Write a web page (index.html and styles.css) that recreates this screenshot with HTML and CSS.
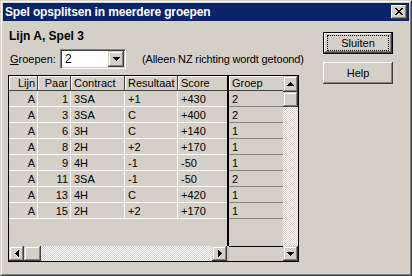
FILE: index.html
```html
<!DOCTYPE html>
<html lang="nl">
<head>
    <meta charset="UTF-8">
    <title>Spel opsplitsen in meerdere groepen</title>
    <link rel="stylesheet" href="styles.css">
</head>
<body>
    <div class="window">
        <div class="frame">
            <div class="titlebar">
                <span class="title">Spel opsplitsen in meerdere groepen</span>
                <span class="close">
                    <svg width="8" height="7" viewBox="0 0 8 7" shape-rendering="crispEdges"><path d="M0 0h2v1H0zM6 0h2v1H6zM1 1h2v1H1zM5 1h2v1H5zM2 2h4v1H2zM3 3h2v1H3zM2 4h4v1H2zM1 5h2v1H1zM5 5h2v1H5zM0 6h2v1H0zM6 6h2v1H6z"/></svg>
                </span>
            </div>
            <div class="content">
                <div class="main">
                    <div class="heading">Lijn A, Spel 3</div>
                    <div class="filter">
                        <label class="label"><u>G</u>roepen:</label>
                        <div class="combo">
                            <span class="combo-value">2</span>
                            <span class="sb-btn combo-btn">
                                <svg width="7" height="4" viewBox="0 0 7 4" shape-rendering="crispEdges"><path d="M0 0h7v1H0zM1 1h5v1H1zM2 2h3v1H2zM3 3h1v1H3z"/></svg>
                            </span>
                        </div>
                        <span class="hint">(Alleen NZ richting wordt getoond)</span>
                    </div>
                    <div class="grid">
                        <div class="pane-left">
                            <div class="cells">
                                <div class="hd r">Lijn</div><div class="hd r">Paar</div><div class="hd">Contract</div><div class="hd">Resultaat</div><div class="hd last">Score</div>
                                <div class="c r">A</div><div class="c r">1</div><div class="c">3SA</div><div class="c">+1</div><div class="c last">+430</div>
                                <div class="c r">A</div><div class="c r">3</div><div class="c">3SA</div><div class="c">C</div><div class="c last">+400</div>
                                <div class="c r">A</div><div class="c r">6</div><div class="c">3H</div><div class="c">C</div><div class="c last">+140</div>
                                <div class="c r">A</div><div class="c r">8</div><div class="c">2H</div><div class="c">+2</div><div class="c last">+170</div>
                                <div class="c r">A</div><div class="c r">9</div><div class="c">4H</div><div class="c">-1</div><div class="c last">-50</div>
                                <div class="c r">A</div><div class="c r">11</div><div class="c">3SA</div><div class="c">-1</div><div class="c last">-50</div>
                                <div class="c r">A</div><div class="c r">13</div><div class="c">4H</div><div class="c">C</div><div class="c last">+420</div>
                                <div class="c r">A</div><div class="c r">15</div><div class="c">2H</div><div class="c">+2</div><div class="c last">+170</div>
                            </div>
                            <div class="fill"></div>
                            <div class="hscroll">
                                <span class="sb-btn sb-side">
                                    <svg width="4" height="7" viewBox="0 0 4 7" shape-rendering="crispEdges"><path d="M3 0h1v7H3zM2 1h1v5H2zM1 2h1v3H1zM0 3h1v1H0z"/></svg>
                                </span>
                                <span class="sb-btn sb-thumb-h"></span>
                                <span class="track"></span>
                                <span class="sb-btn sb-side">
                                    <svg width="4" height="7" viewBox="0 0 4 7" shape-rendering="crispEdges"><path d="M0 0h1v7H0zM1 1h1v5H1zM2 2h1v3H2zM3 3h1v1H3z"/></svg>
                                </span>
                            </div>
                        </div>
                        <div class="splitter">
                            <div class="split-line"></div>
                            <div class="split-foot"></div>
                        </div>
                        <div class="pane-right">
                            <div class="cells-groep">
                                <div class="hd last">Groep</div>
                                <div class="g">2</div>
                                <div class="g">2</div>
                                <div class="g">1</div>
                                <div class="g">1</div>
                                <div class="g">1</div>
                                <div class="g">2</div>
                                <div class="g">1</div>
                                <div class="g">1</div>
                            </div>
                            <div class="fill"></div>
                            <div class="pane-foot"></div>
                        </div>
                        <div class="vscroll">
                            <span class="sb-btn sb-up">
                                <svg width="7" height="4" viewBox="0 0 7 4" shape-rendering="crispEdges"><path d="M3 0h1v1H3zM2 1h3v1H2zM1 2h5v1H1zM0 3h7v1H0z"/></svg>
                            </span>
                            <span class="sb-btn sb-thumb-v"></span>
                            <span class="track"></span>
                            <span class="sb-btn sb-down">
                                <svg width="7" height="4" viewBox="0 0 7 4" shape-rendering="crispEdges"><path d="M0 0h7v1H0zM1 1h5v1H1zM2 2h3v1H2zM3 3h1v1H3z"/></svg>
                            </span>
                        </div>
                    </div>
                </div>
                <div class="actions">
                    <button class="btn default"><span class="focus">Sluiten</span></button>
                    <button class="btn">Help</button>
                </div>
            </div>
        </div>
    </div>
</body>
</html>
```

FILE: styles.css
```css
body {
    margin: 0;
    background-color: #d4d0c8;
    font-family: "Liberation Sans", Arial, sans-serif;
    font-size: 11px;
    color: #000;
}

.window {
    width: 412px;
    height: 276px;
    box-sizing: border-box;
    border: 1px solid;
    border-color: #d4d0c8 #404040 #404040 #d4d0c8;
}

.frame {
    height: 100%;
    box-sizing: border-box;
    border: 1px solid;
    border-color: #fff #808080 #808080 #fff;
    padding: 1px;
    display: flex;
    flex-direction: column;
}

.titlebar {
    height: 18px;
    background-color: #0a246a;
    color: #fff;
    display: flex;
    align-items: center;
    justify-content: space-between;
    padding: 0 2px;
}

.title {
    font-weight: bold;
    font-size: 12px;
    letter-spacing: -0.15px;
}

.close {
    width: 16px;
    height: 14px;
    box-sizing: border-box;
    background-color: #d4d0c8;
    box-shadow: inset -1px -1px #404040, inset 1px 1px #fff, inset -2px -2px #808080;
    display: flex;
    align-items: center;
    justify-content: center;
    padding: 0 1px 1px 0;
}

.content {
    flex: 1;
    display: flex;
    gap: 24px;
    padding: 8px 0 0 5px;
}

.main {
    width: 291px;
    flex-shrink: 0;
}

.heading {
    font-weight: bold;
    font-size: 12px;
    line-height: 14px;
    padding-left: 1px;
}

.filter {
    display: flex;
    align-items: center;
    height: 20px;
    margin-top: 6px;
}

.label {
    width: 52px;
    flex-shrink: 0;
    padding-left: 2px;
    box-sizing: border-box;
}

.combo {
    width: 66px;
    height: 20px;
    flex-shrink: 0;
    box-sizing: border-box;
    display: flex;
    padding: 1px;
    background-color: #fff;
    border: 1px solid;
    border-color: #808080 #fff #fff #808080;
    box-shadow: inset 1px 1px #404040, inset -1px -1px #d4d0c8;
}

.combo-value {
    flex: 1;
    padding-left: 3px;
    font-size: 12px;
    line-height: 16px;
}

.combo-btn {
    width: 16px;
    height: 16px;
}

.hint {
    margin-left: 16px;
    flex-shrink: 0;
    white-space: nowrap;
    letter-spacing: -0.15px;
}

.grid {
    margin-top: 6px;
    width: 291px;
    height: 187px;
    box-sizing: border-box;
    border: 1px solid #000;
    display: flex;
}

.pane-left {
    width: 218px;
    display: flex;
    flex-direction: column;
}

.cells {
    display: grid;
    grid-template-columns: 29px 33px 54px 53px 49px;
    grid-template-rows: 15px;
    grid-auto-rows: 16px;
}

.hd {
    box-sizing: border-box;
    border-right: 1px solid #404040;
    border-bottom: 1px solid #404040;
    box-shadow: inset 1px 1px #fff;
    line-height: 14px;
    padding: 0 2px 0 3px;
    white-space: nowrap;
    overflow: hidden;
}

.c {
    box-sizing: border-box;
    border-right: 1px solid #fff;
    border-bottom: 1px solid #fff;
    line-height: 14px;
    padding: 1px 2px 0 3px;
}

.r {
    text-align: right;
}

.last {
    border-right: 0;
}

.fill {
    flex: 1;
}

.hscroll {
    height: 15px;
    display: flex;
}

.sb-btn {
    box-sizing: border-box;
    background-color: #d4d0c8;
    box-shadow: inset -1px -1px #404040, inset 1px 1px #d4d0c8, inset -2px -2px #808080, inset 2px 2px #fff;
    display: flex;
    align-items: center;
    justify-content: center;
}

.sb-side {
    width: 15px;
}

.sb-thumb-h {
    width: 17px;
}

.track {
    flex: 1;
    background: repeating-conic-gradient(#fff 0 25%, #d4d0c8 0 50%) 0 0 / 2px 2px;
}

.splitter {
    width: 2px;
    display: flex;
    flex-direction: column;
}

.split-line {
    flex: 1;
    background-color: #000;
}

.split-foot {
    height: 15px;
    background-color: #c4c0b8;
}

.pane-right {
    width: 54px;
    display: flex;
    flex-direction: column;
}

.cells-groep {
    display: grid;
    grid-template-rows: 15px;
    grid-auto-rows: 16px;
}

.g {
    box-sizing: border-box;
    border-bottom: 1px solid #808080;
    line-height: 14px;
    padding: 1px 2px 0 3px;
}

.pane-foot {
    height: 15px;
    box-sizing: border-box;
    border-top: 1px solid #000;
}

.vscroll {
    width: 15px;
    display: flex;
    flex-direction: column;
}

.sb-up {
    height: 16px;
}

.sb-thumb-v {
    height: 15px;
}

.sb-down {
    height: 15px;
}

.actions {
    display: flex;
    flex-direction: column;
    gap: 8px;
    padding-top: 3px;
}

.btn {
    width: 70px;
    height: 22px;
    box-sizing: border-box;
    padding: 0;
    border: 0;
    font: inherit;
    color: #000;
    background-color: #d4d0c8;
    box-shadow: inset -1px -1px #404040, inset 1px 1px #fff, inset -2px -2px #808080;
}

.btn.default {
    border: 1px solid #000;
    display: flex;
    flex-direction: column;
}

.focus {
    flex: 1;
    margin: 2px 3px;
    border: 1px dotted #000;
    display: flex;
    align-items: center;
    justify-content: center;
}
```
